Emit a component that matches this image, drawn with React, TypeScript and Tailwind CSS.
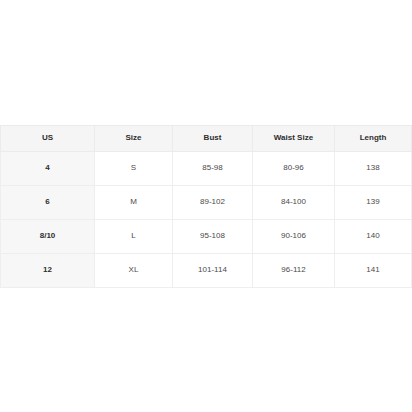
import React from "react";

const header = ["US", "Size", "Bust", "Waist Size", "Length"];
const rows = [
  ["4", "S", "85-98", "80-96", "138"],
  ["6", "M", "89-102", "84-100", "139"],
  ["8/10", "L", "95-108", "90-106", "140"],
  ["12", "XL", "101-114", "96-112", "141"],
];
const widths = ["w-[94px]", "w-[78px]", "w-[80px]", "w-[82px]", "w-[77px]"];

export default function App() {
  return (
    <div className="flex h-[412px] w-[412px] items-center bg-white" style={{ fontFamily: '"Liberation Sans", Arial, sans-serif' }}>
      <table className="w-[411px] table-fixed border-collapse text-[8px]">
        <thead>
          <tr className="h-[26px] bg-[#f5f5f5]">
            {header.map((h, i) => (
              <th key={h} className={`${widths[i]} border border-[#ebebeb] text-center font-bold text-[#2e2e2e]`}>
                {h}
              </th>
            ))}
          </tr>
        </thead>
        <tbody>
          {rows.map((r) => (
            <tr key={r[0]} className="h-[34px]">
              {r.map((c, i) => (
                <td
                  key={i}
                  className={
                    i === 0
                      ? "border border-[#eeeeee] bg-[#f7f7f7] text-center font-bold text-[#2e2e2e]"
                      : "border border-[#eeeeee] bg-white text-center text-[#4a4a4a]"
                  }
                >
                  {c}
                </td>
              ))}
            </tr>
          ))}
        </tbody>
      </table>
    </div>
  );
}
